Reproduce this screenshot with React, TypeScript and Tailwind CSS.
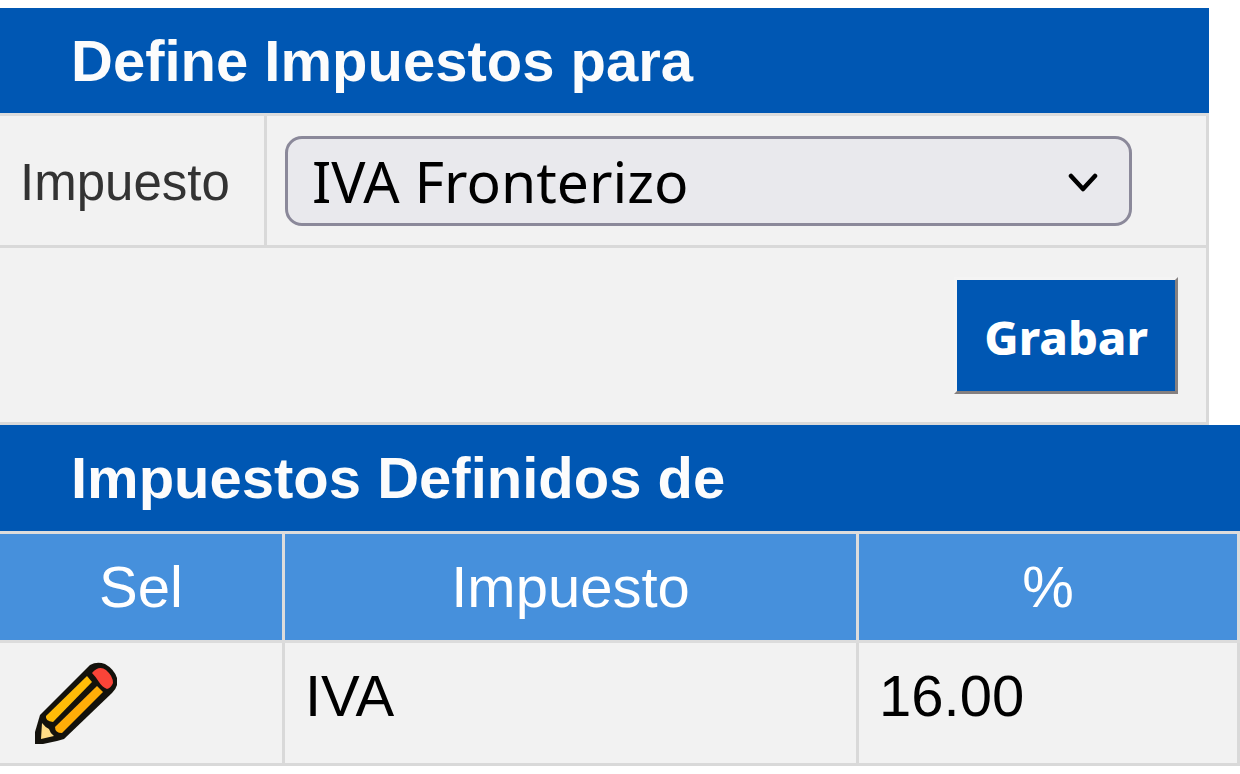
import { useState } from "react";

const taxes = [{ name: "IVA", rate: "16.00" }];

function PencilIcon() {
  return (
    <svg viewBox="0 0 84 84" className="block size-[84px]" aria-hidden="true">
      <path
        d="M1 83 L1 71 L6 54 L56 4 Q63 0 71 3 Q80 8 83 17 L83 24 Q82 28 78 32 L30 78 L23 80 L9 83 Z"
        fill="#14120c"
      />
      <path d="M12 55 L53 15 L58 21 L19 61 Q11 60 12 55 Z" fill="#ffbc08" />
      <path d="M21 66 L63 25 L69 31 L28 72 Q21 72 21 66 Z" fill="#ffad08" />
      <path d="M8 62 Q11 66 15 68 Q16 72 20 75 L7 78 Z" fill="#ffdc86" />
      <path d="M58 12 Q65 4 72 9 Q79 15 79 22 Q77 27 73 28 Q68 26 65 21 Q62 16 58 12 Z" fill="#fa4438" />
    </svg>
  );
}

export default function App() {
  const [tax, setTax] = useState("IVA Fronterizo");

  return (
    <main className="bg-white pt-2 font-['Liberation_Sans',Arial,sans-serif] text-[58px] leading-[66px] text-black">
      <form onSubmit={(e) => e.preventDefault()}>
        <table className="w-[97.5%] table-fixed border-separate border-spacing-0 bg-[#f2f2f2]">
          <colgroup>
            <col className="w-[267px]" />
            <col />
          </colgroup>
          <thead>
            <tr>
              <th
                colSpan={2}
                className="h-[108px] border-b-3 border-[#dcdcdc] bg-[#0057b3] bg-clip-padding px-[71px] py-0 text-left font-bold text-[#fcfcfc]"
              >
                Define Impuestos para
              </th>
            </tr>
          </thead>
          <tbody>
            <tr>
              <td className="h-[132px] border-r-3 border-b-3 border-[#d9d9d9] pt-1 pl-5 text-[51px] text-[#333333]">
                <label htmlFor="tax">Impuesto</label>
              </td>
              <td className="border-r-3 border-b-3 border-[#d9d9d9] px-[18px]">
                <div className="relative w-[847px] max-w-full">
                  <select
                    id="tax"
                    value={tax}
                    onChange={(e) => setTax(e.target.value)}
                    className="block h-[90px] w-full appearance-none rounded-[17px] border-3 border-[#8b899a] bg-[#e9e9ed] pr-20 pl-6 font-['Noto_Sans',sans-serif] text-[57px] leading-[80px] text-black"
                  >
                    <option>IVA Fronterizo</option>
                    <option>IVA</option>
                  </select>
                  <svg
                    viewBox="0 0 30 20"
                    className="pointer-events-none absolute top-[37px] right-[34px] h-5 w-[30px]"
                    aria-hidden="true"
                  >
                    <path
                      d="M3 3 L15 16 L27 3"
                      fill="none"
                      stroke="#000"
                      strokeWidth="4.5"
                      strokeLinecap="round"
                      strokeLinejoin="round"
                    />
                  </svg>
                </div>
              </td>
            </tr>
            <tr>
              <td
                colSpan={2}
                className="h-[177px] border-r-3 border-b-3 border-[#d9d9d9] pr-7 text-right"
              >
                <button
                  type="submit"
                  className="inline-block h-[117px] border-3 border-t-[#f4f4f4] border-r-[#858080] border-b-[#858080] border-l-[#f4f4f4] bg-[#0057b3] bg-clip-padding px-[27px] pt-1 align-middle font-['Noto_Sans',sans-serif] text-[47px] leading-[66px] font-extrabold text-white"
                >
                  Grabar
                </button>
              </td>
            </tr>
          </tbody>
        </table>
      </form>

      <table className="w-full table-fixed border-separate border-spacing-0 bg-[#f2f2f2]">
        <colgroup>
          <col className="w-[285px]" />
          <col className="w-[574px]" />
          <col />
        </colgroup>
        <thead>
          <tr>
            <th
              colSpan={3}
              className="h-[109px] border-b-3 border-[#dcdcdc] bg-[#0057b3] bg-clip-padding px-[71px] py-0 text-left font-bold text-[#fcfcfc]"
            >
              Impuestos Definidos de
            </th>
          </tr>
          <tr>
            {["Sel", "Impuesto", "%"].map((heading) => (
              <th
                key={heading}
                scope="col"
                className="h-[109px] border-r-3 border-b-3 border-[#dcdcdc] bg-[#4690dc] bg-clip-padding p-0 text-center font-normal text-white"
              >
                {heading}
              </th>
            ))}
          </tr>
        </thead>
        <tbody>
          {taxes.map((row) => (
            <tr key={row.name}>
              <td className="h-[123px] border-r-3 border-b-3 border-[#d9d9d9] px-[34px] py-0">
                <button type="button" aria-label={`Editar ${row.name}`} className="block">
                  <PencilIcon />
                </button>
              </td>
              <td className="border-r-3 border-b-3 border-[#d9d9d9] px-5 pt-5 pb-0 align-top">
                {row.name}
              </td>
              <td className="border-r-3 border-b-3 border-[#d9d9d9] px-5 pt-5 pb-0 align-top">
                {row.rate}
              </td>
            </tr>
          ))}
        </tbody>
      </table>
    </main>
  );
}
